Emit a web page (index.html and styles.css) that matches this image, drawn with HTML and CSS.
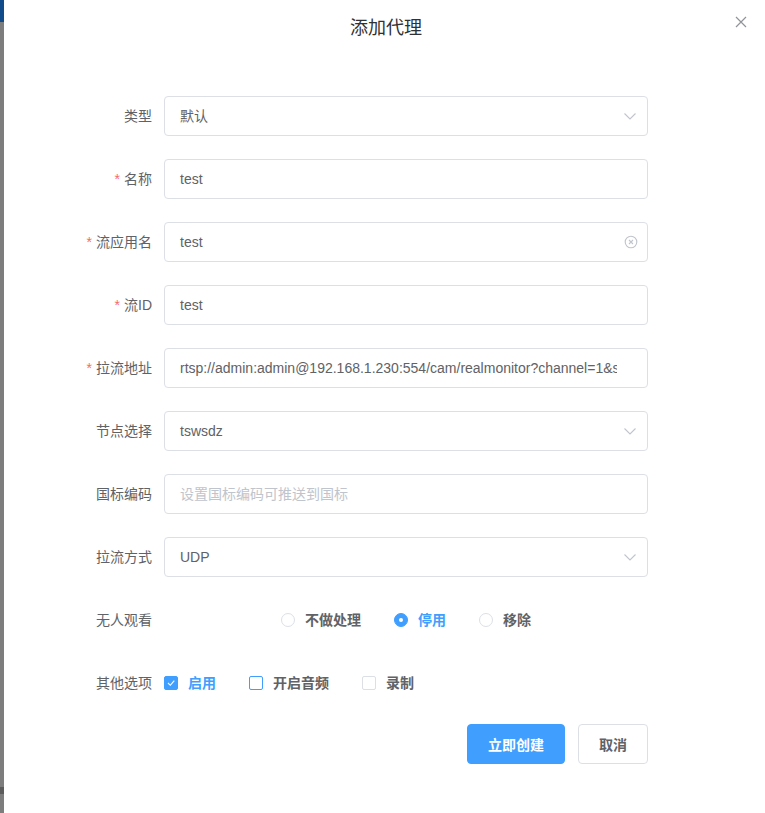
FILE: index.html
```html
<!DOCTYPE html>
<html lang="zh-CN">
<head>
<meta charset="utf-8">
<title>添加代理</title>
<link rel="stylesheet" href="styles.css">
</head>
<body>
<div class="side">
  <div class="side-top"></div>
  <div class="side-mid"></div>
  <div class="side-band"></div>
  <div class="side-bottom"></div>
</div>
<div class="dialog">
  <div class="header">
    <span class="title">添加代理</span>
    <button class="close" aria-label="关闭">
      <svg width="12" height="12" viewBox="0 0 12 12"><path d="M1 1 L11 11 M11 1 L1 11" stroke="#909399" stroke-width="1.2" fill="none"/></svg>
    </button>
  </div>
  <div class="form">
    <div class="item">
      <label class="label">类型</label>
      <div class="input select"><span class="value">默认</span>
        <svg class="suffix" width="12" height="7" viewBox="0 0 12 7"><path d="M0.5 0.5 L6 6 L11.5 0.5" stroke="#c0c4cc" stroke-width="1.1" fill="none"/></svg>
      </div>
    </div>
    <div class="item">
      <label class="label"><span class="req">*</span>名称</label>
      <div class="input"><span class="value">test</span></div>
    </div>
    <div class="item">
      <label class="label"><span class="req">*</span>流应用名</label>
      <div class="input clearable"><span class="value">test</span>
        <svg class="suffix" width="14" height="14" viewBox="0 0 14 14"><circle cx="7" cy="7" r="5.8" stroke="#c0c4cc" stroke-width="1.1" fill="none"/><path d="M5 5 L9 9 M9 5 L5 9" stroke="#c0c4cc" stroke-width="1.1" fill="none"/></svg>
      </div>
    </div>
    <div class="item">
      <label class="label"><span class="req">*</span>流ID</label>
      <div class="input"><span class="value">test</span></div>
    </div>
    <div class="item">
      <label class="label"><span class="req">*</span>拉流地址</label>
      <div class="input url"><span class="value clip">rtsp://admin:admin@192.168.1.230:554/cam/realmonitor?channel=1&amp;subtype=0</span></div>
    </div>
    <div class="item">
      <label class="label">节点选择</label>
      <div class="input select"><span class="value">tswsdz</span>
        <svg class="suffix" width="12" height="7" viewBox="0 0 12 7"><path d="M0.5 0.5 L6 6 L11.5 0.5" stroke="#c0c4cc" stroke-width="1.1" fill="none"/></svg>
      </div>
    </div>
    <div class="item">
      <label class="label">国标编码</label>
      <div class="input"><span class="value placeholder">设置国标编码可推送到国标</span></div>
    </div>
    <div class="item">
      <label class="label">拉流方式</label>
      <div class="input select"><span class="value">UDP</span>
        <svg class="suffix" width="12" height="7" viewBox="0 0 12 7"><path d="M0.5 0.5 L6 6 L11.5 0.5" stroke="#c0c4cc" stroke-width="1.1" fill="none"/></svg>
      </div>
    </div>
    <div class="item">
      <label class="label">无人观看</label>
      <div class="radios">
        <span class="radio"><span class="radio-dot"></span><span class="opt">不做处理</span></span>
        <span class="radio on"><span class="radio-dot"></span><span class="opt">停用</span></span>
        <span class="radio"><span class="radio-dot"></span><span class="opt">移除</span></span>
      </div>
    </div>
    <div class="item item-checks">
      <label class="label">其他选项</label>
      <div class="checks">
        <span class="check on"><span class="box"><svg width="10" height="8" viewBox="0 0 10 8"><path d="M2 4 L4.3 6.3 L8.3 1.6" stroke="#fff" stroke-width="1.1" fill="none"/></svg></span><span class="opt">启用</span></span>
        <span class="check focus"><span class="box"></span><span class="opt">开启音频</span></span>
        <span class="check"><span class="box"></span><span class="opt">录制</span></span>
      </div>
    </div>
    <div class="item actions">
      <button class="btn primary">立即创建</button>
      <button class="btn">取消</button>
    </div>
  </div>
</div>
</body>
</html>
```
FILE: styles.css
```css
html, body {
  margin: 0;
  padding: 0;
  height: 100%;
}
body {
  display: flex;
  background: #fff;
  font-family: "Liberation Sans", "Noto Sans CJK SC", sans-serif;
  font-size: 14px;
  color: #606266;
  overflow: hidden;
}
.side {
  width: 4px;
  flex: none;
  display: flex;
  flex-direction: column;
}
.side-top { height: 22px; background: #124b8a; }
.side-mid { height: 765px; background: #7d7d7d; }
.side-band { height: 7px; background: #5c5c5c; }
.side-bottom { flex: 1; background: #7d7d7d; }

.dialog {
  flex: 1;
  position: relative;
  background: #fff;
}
.header {
  padding: 16px 0 0 3px;
  text-align: center;
  height: 24px;
}
.title {
  font-size: 18px;
  line-height: 24px;
  color: #303133;
}
.close {
  position: absolute;
  top: 15px;
  right: 17px;
  width: 14px;
  height: 14px;
  padding: 0;
  border: 0;
  background: transparent;
  display: flex;
  align-items: center;
  justify-content: center;
}
.form {
  padding: 56px 0 0 40px;
}
.item {
  display: flex;
  align-items: center;
  height: 40px;
  margin-bottom: 23px;
}
.item-checks {
  margin-bottom: 21px;
}
.label {
  width: 120px;
  flex: none;
  box-sizing: border-box;
  padding-right: 12px;
  text-align: right;
  line-height: 40px;
  color: #606266;
}
.req {
  color: #f56c6c;
  margin-right: 4px;
}
.input {
  width: 484px;
  height: 40px;
  box-sizing: border-box;
  border: 1px solid #dcdfe6;
  border-radius: 4px;
  padding: 0 15px;
  display: flex;
  align-items: center;
  justify-content: space-between;
  background: #fff;
}
.select {
  padding-right: 11px;
}
.clearable {
  padding-right: 9px;
}
.value {
  color: #606266;
  line-height: 38px;
  white-space: nowrap;
}
.placeholder { color: #c0c4cc; }
.url { padding-right: 30px; }
.clip {
  overflow: hidden;
  flex: 1;
}
.suffix { flex: none; }

.radios {
  width: 484px;
  display: flex;
  justify-content: center;
  align-items: center;
}
.radio, .check {
  display: flex;
  align-items: center;
  font-weight: 700;
  color: #606266;
}
.radio { margin-right: 33px; }
.radio:last-child { margin-right: 0; }
.radio-dot {
  width: 14px;
  height: 14px;
  box-sizing: border-box;
  border: 1px solid #dcdfe6;
  border-radius: 50%;
  display: flex;
  align-items: center;
  justify-content: center;
  background: #fff;
}
.radio.on .radio-dot {
  background: #409eff;
  border-color: #409eff;
}
.radio.on .radio-dot::after {
  content: "";
  width: 4px;
  height: 4px;
  border-radius: 50%;
  background: #fff;
}
.opt {
  padding-left: 10px;
  line-height: 20px;
}
.radio.on .opt, .check.on .opt { color: #409eff; }

.checks {
  display: flex;
  align-items: center;
}
.check { margin-right: 33px; }
.box {
  width: 14px;
  height: 14px;
  box-sizing: border-box;
  border: 1px solid #dcdfe6;
  border-radius: 2px;
  display: flex;
  align-items: center;
  justify-content: center;
  background: #fff;
}
.check.on .box { background: #409eff; border-color: #409eff; }
.check.focus .box { border-color: #409eff; }

.actions {
  width: 604px;
  justify-content: flex-end;
  gap: 13px;
}
.btn {
  height: 40px;
  padding: 0 20px;
  border: 1px solid #dcdfe6;
  border-radius: 4px;
  background: #fff;
  color: #606266;
  font-family: inherit;
  font-size: 14px;
  font-weight: 700;
}
.btn.primary {
  background: #409eff;
  border-color: #409eff;
  color: #fff;
}
```
